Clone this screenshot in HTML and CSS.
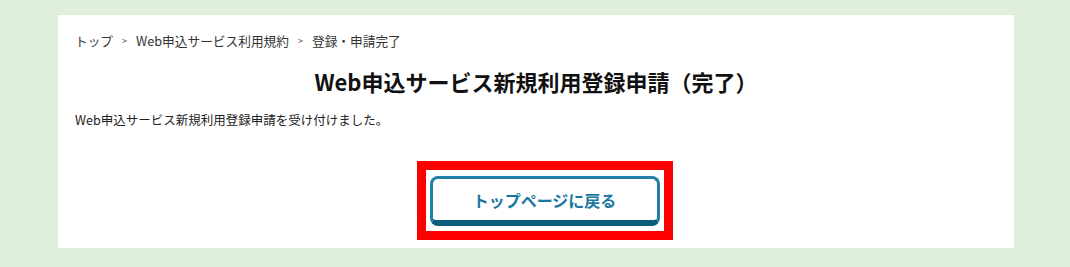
FILE: index.html
```html
<!DOCTYPE html>
<html lang="ja">
<head>
<meta charset="utf-8">
<title>Web申込サービス新規利用登録申請（完了）</title>
<link rel="stylesheet" href="styles.css">
</head>
<body>
<div class="page">
  <main class="panel">
    <nav class="breadcrumb">
      <span class="crumb">トップ</span>
      <span class="sep">&gt;</span>
      <span class="crumb">Web申込サービス利用規約</span>
      <span class="sep">&gt;</span>
      <span class="crumb">登録・申請完了</span>
    </nav>
    <h1 class="title">Web申込サービス新規利用登録申請（完了）</h1>
    <p class="message">Web申込サービス新規利用登録申請を受け付けました。</p>
    <div class="actions">
      <div class="highlight">
        <a class="btn" href="#">トップページに戻る</a>
      </div>
    </div>
  </main>
</div>
</body>
</html>
```

FILE: styles.css
```css
html, body {
  margin: 0;
  padding: 0;
}
body {
  background: #dfefdc;
  font-family: "Noto Sans CJK JP", "Noto Sans", sans-serif;
  color: #333;
}
.page {
  padding: 15px 0 0 58px;
}
.panel {
  box-sizing: border-box;
  width: 956px;
  height: 233px;
  background: #fff;
  padding: 16px 17px 0 17px;
}
.breadcrumb {
  display: flex;
  align-items: center;
  font-size: 12.7px;
  line-height: 20px;
  color: #333;
}
.sep {
  font-size: 9px;
  margin: 0 9px;
  color: #444;
}
.title {
  margin: 15px 0 0 0;
  text-align: center;
  font-size: 22px;
  line-height: 30px;
  font-weight: bold;
  color: #111;
}
.message {
  margin: 15px 0 0 0;
  font-size: 12.5px;
  line-height: 18px;
  color: #222;
}
.actions {
  display: flex;
  justify-content: center;
  margin-top: 32px;
  padding-left: 17px;
}
.highlight {
  border: 9px solid #ff0000;
  padding: 6px 4px 5px 4px;
  background: #fff;
}
.btn {
  box-sizing: border-box;
  display: flex;
  align-items: center;
  justify-content: center;
  width: 230px;
  height: 50px;
  border: 3px solid #1f80a8;
  border-bottom: 6px solid #0c5c7a;
  border-radius: 8px;
  background: #fff;
  color: #1a78a0;
  font-size: 16px;
  font-weight: bold;
  text-decoration: none;
}
```
